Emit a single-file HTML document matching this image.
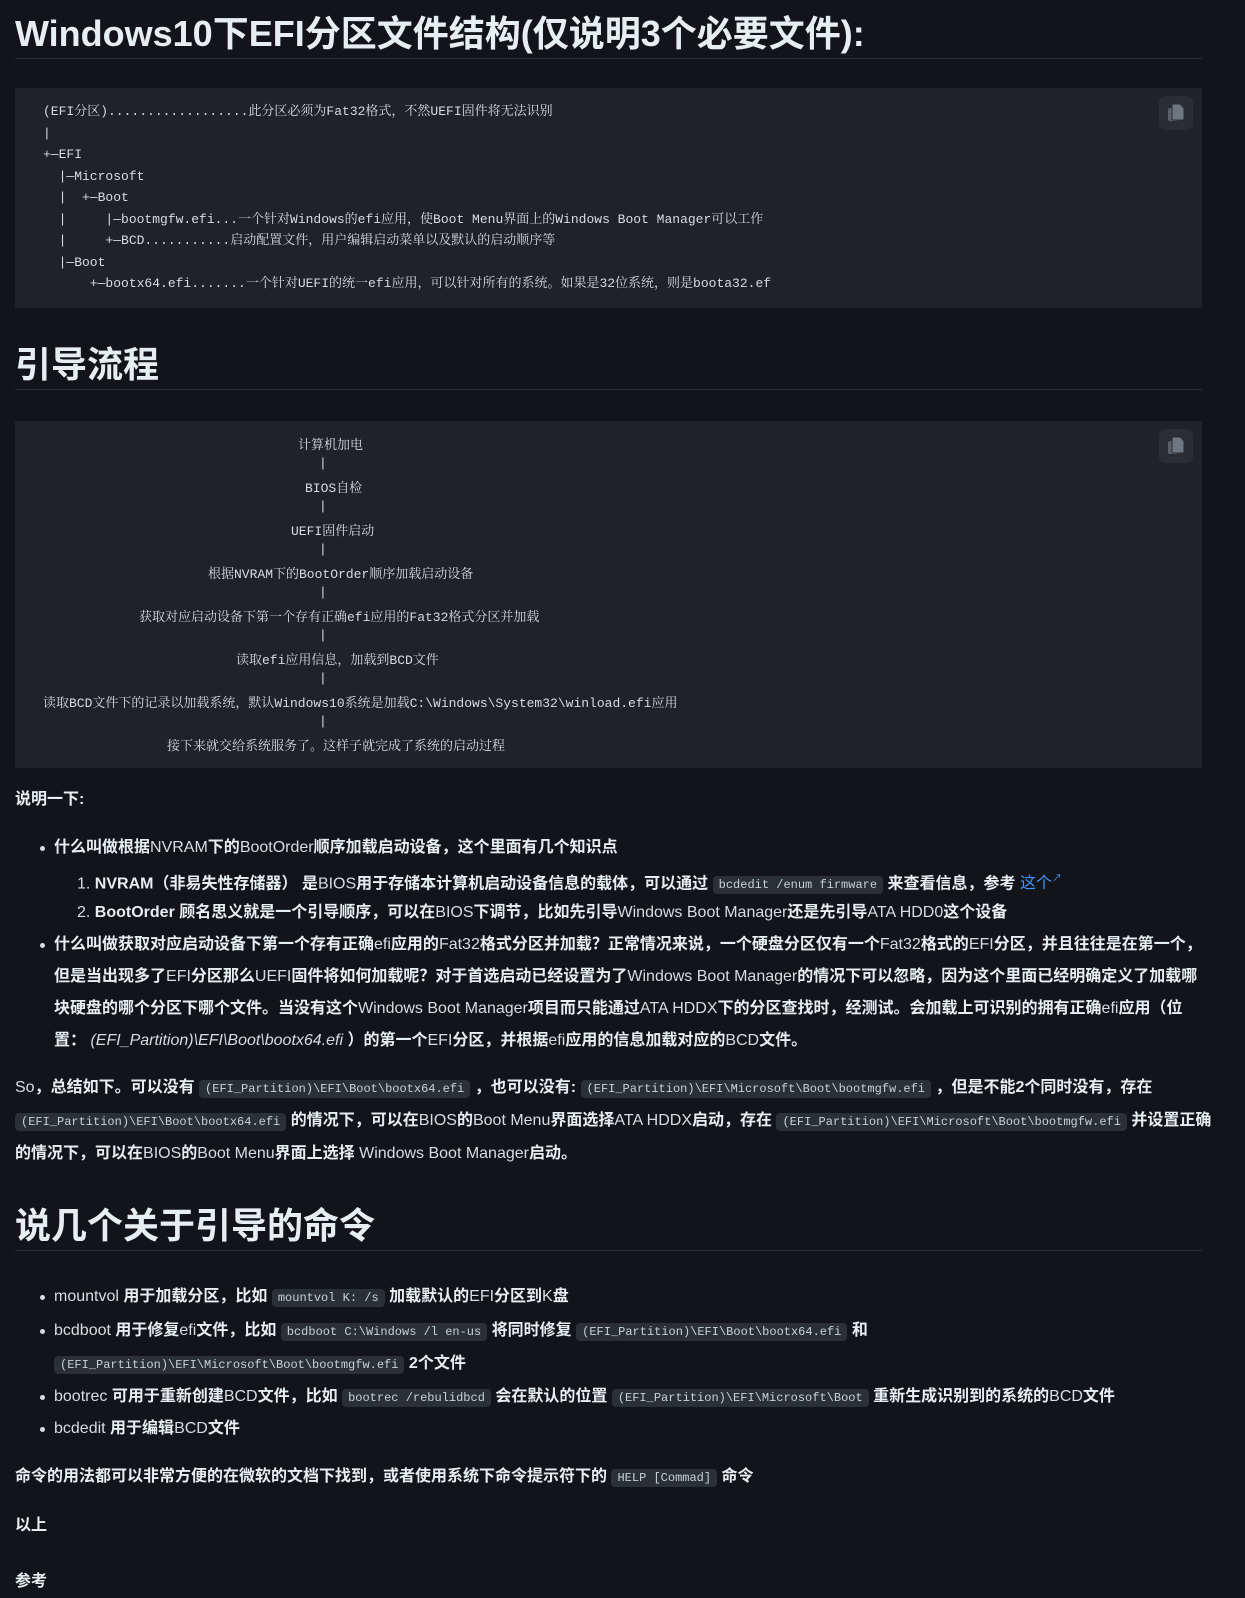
<!DOCTYPE html>
<html><head><meta charset="utf-8"><style>
html,body{margin:0;padding:0;background:#131419;}
body{width:1245px;height:1584px;position:relative;overflow:hidden;color:#d6dce3;font-family:"Liberation Sans","Noto Sans CJK SC",sans-serif;font-size:16px;}
.a{position:absolute;white-space:nowrap;}
h1{position:absolute;left:15px;width:1187px;margin:0;font-size:36px;font-weight:600;color:#e6edf3;border-bottom:1px solid #2a2e35;line-height:48px;}
.pre{position:absolute;left:15px;width:1187px;background:#1f2228;}
.pre pre{margin:0;font-family:"Liberation Mono","Noto Serif CJK SC",monospace;font-size:13px;line-height:21.5px;color:#d6dce3;}
.copy{position:absolute;right:9px;top:8px;width:34px;height:34px;background:#2a2d33;border-radius:6px;}
.ln{position:absolute;font-family:"Liberation Mono","Noto Serif CJK SC",monospace;font-size:13px;white-space:pre;color:#d6dce3;}
.l{position:absolute;line-height:32px;white-space:nowrap;}
code{font-family:"Liberation Mono","Noto Serif CJK SC",monospace;font-size:12px;background:#2b2f36;border-radius:4px;padding:2px 6px;color:#c9d1d9;}
b{font-weight:700;color:#e6edf3;}
.dot{position:absolute;width:5px;height:5px;border-radius:50%;background:#d6dce3;}
a{color:#4493f8;text-decoration:none;}
</style></head><body>

<h1 style="top:10px;">Windows10下EFI分区文件结构(仅说明3个必要文件):</h1>

<div class="pre" style="top:88px;height:220px;">
<div class="copy"><svg width="34" height="34" viewBox="0 0 34 34"><rect x="9" y="12" width="10" height="13" rx="2" fill="#5b616b"/><path d="M14 8h7l4 4v11a1 1 0 0 1-1 1h-10a1 1 0 0 1-1-1V9a1 1 0 0 1 1-1z" fill="#6e7681" stroke="#2a2d33" stroke-width="1"/></svg></div>
<pre style="padding:13px 28px;">(EFI分区)..................此分区必须为Fat32格式，不然UEFI固件将无法识别
|
+—EFI
  |—Microsoft
  |  +—Boot
  |     |—bootmgfw.efi...一个针对Windows的efi应用，使Boot Menu界面上的Windows Boot Manager可以工作
  |     +—BCD...........启动配置文件，用户编辑启动菜单以及默认的启动顺序等
  |—Boot
      +—bootx64.efi.......一个针对UEFI的统一efi应用，可以针对所有的系统。如果是32位系统，则是boota32.ef</pre>
</div>

<h1 style="top:341px;">引导流程</h1>

<div class="pre" style="top:421px;height:347px;">
<div class="copy"><svg width="34" height="34" viewBox="0 0 34 34"><rect x="9" y="12" width="10" height="13" rx="2" fill="#5b616b"/><path d="M14 8h7l4 4v11a1 1 0 0 1-1 1h-10a1 1 0 0 1-1-1V9a1 1 0 0 1 1-1z" fill="#6e7681" stroke="#2a2d33" stroke-width="1"/></svg></div>
<div class="ln" style="left:283px;top:13px;">计算机加电</div>
<div class="ln" style="left:304px;top:35px;">|</div>
<div class="ln" style="left:290px;top:56px;">BIOS自检</div>
<div class="ln" style="left:304px;top:78px;">|</div>
<div class="ln" style="left:276px;top:99px;">UEFI固件启动</div>
<div class="ln" style="left:304px;top:121px;">|</div>
<div class="ln" style="left:193px;top:142px;">根据NVRAM下的BootOrder顺序加载启动设备</div>
<div class="ln" style="left:304px;top:164px;">|</div>
<div class="ln" style="left:124px;top:185px;">获取对应启动设备下第一个存有正确efi应用的Fat32格式分区并加载</div>
<div class="ln" style="left:304px;top:207px;">|</div>
<div class="ln" style="left:221px;top:228px;">读取efi应用信息，加载到BCD文件</div>
<div class="ln" style="left:304px;top:250px;">|</div>
<div class="ln" style="left:28px;top:271px;">读取BCD文件下的记录以加载系统，默认Windows10系统是加载C:\Windows\System32\winload.efi应用</div>
<div class="ln" style="left:304px;top:293px;">|</div>
<div class="ln" style="left:152px;top:314px;">接下来就交给系统服务了。这样子就完成了系统的启动过程</div>
</div>

<div class="l" style="left:15px;top:784px;"><b>说明一下:</b></div>

<div class="dot" style="left:40px;top:846px;"></div>
<div class="l" style="left:54px;top:832px;"><b>什么叫做根据</b>NVRAM<b>下的</b>BootOrder<b>顺序加载启动设备，这个里面有几个知识点</b></div>
<div class="l" style="left:77px;top:864px;">1. <b>NVRAM（非易失性存储器）</b> <b>是</b>BIOS<b>用于存储本计算机启动设备信息的载体，可以通过</b> <code>bcdedit /enum firmware</code> <b>来查看信息，参考</b> <a>这个<sup style="font-size:10px">↗</sup></a></div>
<div class="l" style="left:77px;top:897px;">2. <b>BootOrder</b> <b>顾名思义就是一个引导顺序，可以在</b>BIOS<b>下调节，比如先引导</b>Windows Boot Manager<b>还是先引导</b>ATA HDD0<b>这个设备</b></div>
<div class="dot" style="left:40px;top:943px;"></div>
<div class="l" style="left:54px;top:929px;"><b>什么叫做获取对应启动设备下第一个存有正确</b>efi<b>应用的</b>Fat32<b>格式分区并加载？正常情况来说，一个硬盘分区仅有一个</b>Fat32<b>格式的</b>EFI<b>分区，并且往往是在第一个，</b></div>
<div class="l" style="left:54px;top:961px;"><b>但是当出现多了</b>EFI<b>分区那么</b>UEFI<b>固件将如何加载呢？对于首选启动已经设置为了</b>Windows Boot Manager<b>的情况下可以忽略，因为这个里面已经明确定义了加载哪</b></div>
<div class="l" style="left:54px;top:993px;"><b>块硬盘的哪个分区下哪个文件。当没有这个</b>Windows Boot Manager<b>项目而只能通过</b>ATA HDDX<b>下的分区查找时，经测试。会加载上可识别的拥有正确</b>efi<b>应用（位</b></div>
<div class="l" style="left:54px;top:1025px;"><b>置：</b> <i>(EFI_Partition)\EFI\Boot\bootx64.efi</i> <b>）的第一个</b>EFI<b>分区，并根据</b>efi<b>应用的信息加载对应的</b>BCD<b>文件。</b></div>

<div class="l" style="left:15px;top:1072px;">So<b>，总结如下。可以没有</b> <code>(EFI_Partition)\EFI\Boot\bootx64.efi</code> <b>，也可以没有:</b> <code>(EFI_Partition)\EFI\Microsoft\Boot\bootmgfw.efi</code> <b>，但是不能2个同时没有，存在</b></div>
<div class="l" style="left:15px;top:1105px;"><code>(EFI_Partition)\EFI\Boot\bootx64.efi</code> <b>的情况下，可以在</b>BIOS<b>的</b>Boot Menu<b>界面选择</b>ATA HDDX<b>启动，存在</b> <code>(EFI_Partition)\EFI\Microsoft\Boot\bootmgfw.efi</code> <b>并设置正确</b></div>
<div class="l" style="left:15px;top:1138px;"><b>的情况下，可以在</b>BIOS<b>的</b>Boot Menu<b>界面上选择</b> Windows Boot Manager<b>启动。</b></div>

<h1 style="top:1202px;">说几个关于引导的命令</h1>

<div class="dot" style="left:40px;top:1295px;"></div>
<div class="l" style="left:54px;top:1281px;">mountvol <b>用于加载分区，比如</b> <code>mountvol K: /s</code> <b>加载默认的</b>EFI<b>分区到</b>K<b>盘</b></div>
<div class="dot" style="left:40px;top:1329px;"></div>
<div class="l" style="left:54px;top:1315px;">bcdboot <b>用于修复</b>efi<b>文件，比如</b> <code>bcdboot C:\Windows /l en-us</code> <b>将同时修复</b> <code>(EFI_Partition)\EFI\Boot\bootx64.efi</code> <b>和</b></div>
<div class="l" style="left:54px;top:1348px;"><code>(EFI_Partition)\EFI\Microsoft\Boot\bootmgfw.efi</code> <b>2个文件</b></div>
<div class="dot" style="left:40px;top:1395px;"></div>
<div class="l" style="left:54px;top:1381px;">bootrec <b>可用于重新创建</b>BCD<b>文件，比如</b> <code>bootrec /rebulidbcd</code> <b>会在默认的位置</b> <code>(EFI_Partition)\EFI\Microsoft\Boot</code> <b>重新生成识别到的系统的</b>BCD<b>文件</b></div>
<div class="dot" style="left:40px;top:1427px;"></div>
<div class="l" style="left:54px;top:1413px;">bcdedit <b>用于编辑</b>BCD<b>文件</b></div>

<div class="l" style="left:15px;top:1461px;"><b>命令的用法都可以非常方便的在微软的文档下找到，或者使用系统下命令提示符下的</b> <code>HELP [Commad]</code> <b>命令</b></div>
<div class="l" style="left:15px;top:1510px;"><b>以上</b></div>
<div class="l" style="left:15px;top:1566px;"><b>参考</b></div>
</body></html>
